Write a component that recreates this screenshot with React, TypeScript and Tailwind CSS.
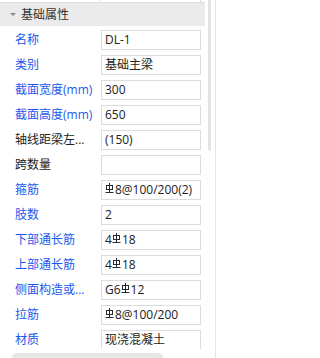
import React from "react";

const Rebar = () => (
  <svg
    width="9"
    height="11"
    viewBox="0 0 9 11"
    className="inline-block mr-[1px] -mt-[3px] align-middle"
    fill="none"
    stroke="#2a2a2a"
    strokeWidth="1"
  >
    <rect x="1.5" y="2.5" width="6" height="4" />
    <line x1="4.5" y1="0" x2="4.5" y2="9" />
    <line x1="0.5" y1="9.5" x2="8.5" y2="9.5" />
  </svg>
);

type Row = { label: string; blue: boolean; value: React.ReactNode };

const rows: Row[] = [
  { label: "名称", blue: true, value: "DL-1" },
  { label: "类别", blue: true, value: "基础主梁" },
  { label: "截面宽度(mm)", blue: true, value: "300" },
  { label: "截面高度(mm)", blue: true, value: "650" },
  { label: "轴线距梁左...", blue: false, value: "(150)" },
  { label: "跨数量", blue: false, value: "" },
  { label: "箍筋", blue: true, value: <><Rebar />8@100/200(2)</> },
  { label: "肢数", blue: true, value: "2" },
  { label: "下部通长筋", blue: true, value: <>4<Rebar />18</> },
  { label: "上部通长筋", blue: true, value: <>4<Rebar />18</> },
  { label: "侧面构造或...", blue: true, value: <>G6<Rebar />12</> },
  { label: "拉筋", blue: true, value: <><Rebar />8@100/200</> },
  { label: "材质", blue: true, value: "现浇混凝土" },
];

const App = () => {
  return (
    <div className="w-[220px] h-[358px] bg-white overflow-hidden flex font-['Open_Sans','Noto_Sans_CJK_SC',sans-serif] text-[12px] leading-none">
      <div className="w-[205px] flex flex-col">
        {/* tail of the previous section */}
        <div className="h-[3px] flex border-b border-[#dedede]">
          <div className="w-[100px] border-r border-[#dedede]" />
          <div className="w-[101px] border-r border-[#dedede]" />
        </div>
        <div className="h-[23px] bg-[#ebebeb] flex items-center">
          <span className="ml-[10px] w-0 h-0 border-l-[3px] border-r-[3px] border-t-[3px] border-l-transparent border-r-transparent border-t-[#8a8a8a]" />
          <span className="ml-[5px] text-[#333]">基础属性</span>
        </div>
        <div className="h-[323px] overflow-hidden flex flex-col gap-[5px] pt-[4px]">
          {rows.map((r) => (
            <div key={r.label} className="h-[20px] shrink-0 flex items-center">
              <div
                className={`w-[101px] pl-[15px] whitespace-nowrap ${
                  r.blue ? "text-[#1a58ec]" : "text-[#222]"
                }`}
              >
                {r.label}
              </div>
              <div className="w-[100px] h-[20px] border border-[#dcdcdc] px-[3px] flex items-center whitespace-nowrap text-[#222]">
                {r.value}
              </div>
            </div>
          ))}
        </div>
        <div className="mt-[4px] ml-[12px] w-[151px] h-[5px] rounded-t-full bg-[#e6e6e6]" />
      </div>
      <div className="w-[11px] flex">
        <div className="ml-[3px] w-[4px] h-[151px] rounded-b-full bg-[#e4e4e4]" />
        <div className="ml-[4px] w-px h-full bg-[#e6e6e6]" />
      </div>
    </div>
  );
};

export default App;
